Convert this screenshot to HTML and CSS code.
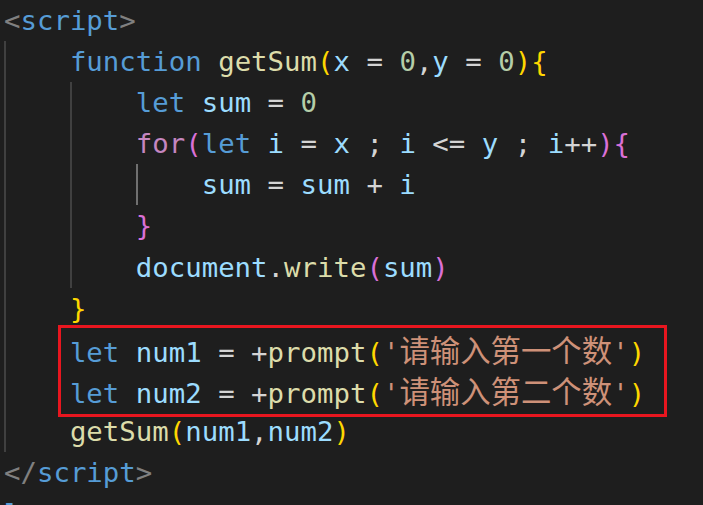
FILE: index.html
```html
<!DOCTYPE html>
<html lang="zh">
<head>
<meta charset="utf-8">
<title>script</title>
<link rel="stylesheet" href="styles.css">
</head>
<body>
<div class="editor">
<div class="line"><span class="p">&lt;</span><span class="tag">script</span><span class="p">&gt;</span></div>
<div class="line g1">    <span class="kw">function</span> <span class="fn">getSum</span><span class="b1">(</span><span class="v">x</span><span class="op"> = </span><span class="n">0</span><span class="op">,</span><span class="v">y</span><span class="op"> = </span><span class="n">0</span><span class="b1">){</span></div>
<div class="line g2">        <span class="kw">let</span> <span class="v">sum</span><span class="op"> = </span><span class="n">0</span></div>
<div class="line g2 current">        <span class="ctl">for</span><span class="b2">(</span><span class="kw">let</span> <span class="v">i</span><span class="op"> = </span><span class="v">x</span><span class="op"> ; </span><span class="v">i</span><span class="op"> &lt;= </span><span class="v">y</span><span class="op"> ; </span><span class="v">i</span><span class="op">++</span><span class="b2">){</span></div>
<div class="line g3">            <span class="v">sum</span><span class="op"> = </span><span class="v">sum</span><span class="op"> + </span><span class="v">i</span></div>
<div class="line g2">        <span class="b2">}</span></div>
<div class="line g2">        <span class="v">document</span><span class="op">.</span><span class="fn">write</span><span class="b2">(</span><span class="v">sum</span><span class="b2">)</span></div>
<div class="line g1">    <span class="b1">}</span></div>
<div class="line g1">    <span class="kw">let</span> <span class="v">num1</span><span class="op"> = +</span><span class="fn">prompt</span><span class="b1">(</span><span class="s">'<span class="cjk">请输入第一个数</span>'</span><span class="b1">)</span></div>
<div class="line g1">    <span class="kw">let</span> <span class="v">num2</span><span class="op"> = +</span><span class="fn">prompt</span><span class="b1">(</span><span class="s">'<span class="cjk">请输入第二个数</span>'</span><span class="b1">)</span></div>
<div class="line g1">    <span class="fn">getSum</span><span class="b1">(</span><span class="v">num1</span><span class="op">,</span><span class="v">num2</span><span class="b1">)</span></div>
<div class="line"><span class="p">&lt;/</span><span class="tag">script</span><span class="p">&gt;</span></div>
<div class="line"><span class="tag">l</span></div>
<div class="mark"></div>
</div>
</body>
</html>
```

FILE: styles.css
```css
html, body {
  margin: 0;
  padding: 0;
  background: #1e1e1e;
  overflow: hidden;
}
.editor {
  position: relative;
  width: 703px;
  height: 505px;
  overflow: hidden;
  font-family: "DejaVu Sans Mono", "Noto Sans CJK SC", monospace;
  font-size: 27.36px;
  color: #d4d4d4;
}
.line {
  height: 41.1px;
  line-height: 41.1px;
  padding-left: 4px;
  white-space: pre;
  position: relative;
}
.g1 {
  background: linear-gradient(#404040, #404040) 4px 0 / 2px 100% no-repeat;
}
.g2 {
  background:
    linear-gradient(#404040, #404040) 4px 0 / 2px 100% no-repeat,
    linear-gradient(#404040, #404040) 70px 0 / 2px 100% no-repeat;
}
.g3 {
  background:
    linear-gradient(#404040, #404040) 4px 0 / 2px 100% no-repeat,
    linear-gradient(#404040, #404040) 70px 0 / 2px 100% no-repeat,
    linear-gradient(#707070, #707070) 136px 0 / 2px 100% no-repeat;
}
.current::before {
  content: "";
  position: absolute;
  left: 0;
  right: 0;
  top: 0;
  bottom: 0;
  border-top: 3px solid #282828;
  border-bottom: 3px solid #282828;
  z-index: -1;
}
.p { color: #808080; }
.tag { color: #569cd6; }
.kw { color: #569cd6; }
.ctl { color: #c586c0; }
.fn { color: #dcdcaa; }
.v { color: #9cdcfe; }
.op { color: #d4d4d4; }
.n { color: #b5cea8; }
.s { color: #ce9178; }
.b1 { color: #ffd700; }
.b2 { color: #da70d6; }
.cjk {
  font-family: "Noto Sans CJK SC", sans-serif;
  font-size: 30.4px;
  line-height: 41.1px;
}
.mark {
  position: absolute;
  left: 58px;
  top: 325px;
  width: 609px;
  height: 92px;
  box-sizing: border-box;
  border: 3px solid #e8161f;
}
```
